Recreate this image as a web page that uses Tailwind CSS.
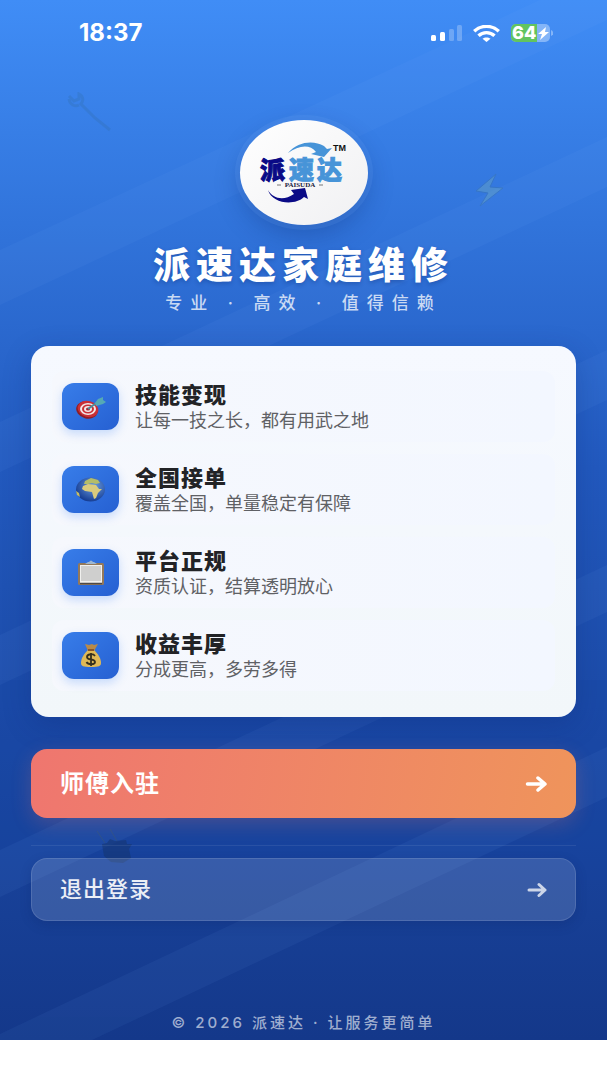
<!DOCTYPE html>
<html lang="zh-CN">
<head>
<meta charset="utf-8">
<meta name="viewport" content="width=device-width, initial-scale=1">
<title>派速达家庭维修</title>
<script src="https://cdn.jsdelivr.net/npm/@tailwindcss/browser@4"></script>
</head>
<body class="flex min-h-screen flex-col bg-white font-['Inter','Noto_Sans_CJK_SC',sans-serif]">
<div class="relative isolate flex flex-1 flex-col overflow-hidden bg-linear-to-b from-[#408df6] via-[#2259be] via-45% to-[#14388a] px-[31px]">

  <!-- Diagonal light bands -->
  <svg class="absolute inset-0 -z-10 h-full w-full" viewBox="0 0 607 1040" preserveAspectRatio="none" aria-hidden="true">
    <rect y="680" width="607" height="200" fill="#1442a4" opacity=".25"/>
    <g fill="#7fb4ff" opacity=".06">
      <path d="M0 250L540 0H607V20L0 305Z"/>
      <path d="M0 422L607 137V187L0 472Z"/>
      <path d="M0 635L607 350V400L0 685Z"/>
      <path d="M0 850L607 565V612L0 897Z"/>
      <path d="M0 1034L607 747V797L92 1040H0Z"/>
    </g>
  </svg>

  <!-- Faint tool ornaments -->
  <svg class="absolute left-[66px] top-[92px] -z-10 h-[42px] w-[48px] opacity-20" viewBox="0 0 48 42" fill="none" stroke="#2f6690" aria-hidden="true">
    <path d="M3 4l5 5 5-2V2c4 2 5 6 2 10L29 26 44 38" stroke-width="3"/><path d="M13 13c-4 2-9 0-10-6" stroke-width="3"/>
  </svg>
  <svg class="absolute left-[474px] top-[173px] -z-10 h-[34px] w-[31px] opacity-35" viewBox="0 0 31 34" aria-hidden="true">
    <path d="M22 1L2 18l12 2L6 33 29 15l-13-1z" fill="#7ab3bb" stroke="#3a729c"/>
  </svg>
  <svg class="absolute left-[96px] top-[828px] -z-10 h-[36px] w-[40px] opacity-60" viewBox="0 0 40 36" aria-hidden="true">
    <path d="M1 3l8 12M14 1l7 12" stroke="#35577c" stroke-width="1"/>
    <path d="M6 16l5-1 3-4 5 2 11-1 1 4 5 0-3 5 2 9-8 5-12-1-7-6z" fill="#163774"/>
  </svg>

  <header class="flex h-[66px] items-center justify-between pl-12 pr-[23px] text-white">
    <time class="text-2xl font-bold leading-6">18:37</time>
    <div class="flex items-center gap-[11px]">
      <svg class="h-4 w-[31px]" viewBox="0 0 31 16" fill="#fff" aria-label="信号">
        <rect y="10" width="5" height="6" rx="1.5"/><rect x="9" y="7" width="5" height="9" rx="1.5"/>
        <rect x="18" y="4" width="5" height="12" rx="1.5" opacity=".25"/><rect x="26" width="5" height="16" rx="1.5" opacity=".25"/>
      </svg>
      <svg class="h-[17px] w-[27px]" viewBox="0 0 27 17" fill="none" stroke="#fff" stroke-width="3.400" aria-label="无线网络">
        <path d="M1.200 6.200C8-.2 19-.2 25.800 6.200"/><path d="M5.500 10.800c4.500-4.200 11.500-4.200 16 0"/><path d="M9.500 13.800c2.300-1.900 5.700-1.900 8 0L13.500 17z" fill="#fff" stroke="none"/>
      </svg>
      <svg class="h-[18px] w-[42px]" viewBox="0 0 42 18" aria-label="电量 64%">
        <rect width="39" height="18" rx="5" fill="#84b5f8"/>
        <path d="M5 0H26V18H5a5 5 0 0 1-5-5V5a5 5 0 0 1 5-5z" fill="#62c45f"/>
        <path d="M40 6c3 1 3 5 0 6z" fill="#84b5f8"/>
        <text x="1" y="15" font-family="Inter" font-size="18" font-weight="800" fill="#fff">64</text>
        <path d="M35 3l-8 7h4l-2 6 9-8h-4z" fill="#fff"/>
      </svg>
    </div>
  </header>

  <main class="flex flex-col">
    <section class="flex flex-col items-center pt-[54px]">
      <div class="h-[105px] w-32 rounded-[50%] bg-linear-to-br from-white to-[#f0f0f2] shadow-[0_0_0_5px_rgba(120,180,255,0.13),0_10px_26px_rgba(10,40,110,0.3)]">
        <svg class="h-full w-full" viewBox="0 0 128 105" role="img" aria-label="派速达">
          <g font-family="Noto Sans CJK SC" font-weight="900" font-size="25" stroke-width="1">
            <text x="20" y="59" fill="#0a0a86" stroke="#0a0a86">派</text>
            <text x="49" y="59" fill="#4794d8" stroke="#4794d8">速</text>
            <text x="77" y="59" fill="#4794d8" stroke="#4794d8">达</text>
          </g>
          <path d="M48 33C58 21 74 20 84 26l3 3 5-1-8 9-13-3 5-2C70 24 59 25 48 33z" fill="#4794d8"/>
          <path d="M28 70c5 9 16 11 26 4l-3-4 14-2 3 11-4-2C55 86 32 84 28 70z" fill="#0a0a86"/>
          <text x="60" y="67" text-anchor="middle" font-family="Liberation Serif" font-size="7" font-weight="700" fill="#22223c">PAISUDA</text>
          <path d="M37 65h4M79 65h4" stroke="#555" stroke-width=".8"/>
          <text x="93" y="31" font-family="Liberation Sans" font-size="9" font-weight="700" fill="#111">TM</text>
        </svg>
      </div>
      <h1 class="mt-[18px] text-[37px] font-black leading-[46px] tracking-[6px] text-white text-shadow-[0_2px_4px_rgba(10,40,110,0.3)]">派速达家庭维修</h1>
      <p class="text-[17px] font-medium leading-7 tracking-[8px] text-white/75">专业 · 高效 · 值得信赖</p>
    </section>

    <ul class="mt-[29px] flex flex-col gap-3 rounded-[18px] bg-linear-to-b from-[#f6f9ff] to-[#f2f7fa] px-[21px] pb-[26px] pt-[25px] shadow-[0_8px_28px_rgba(10,35,110,0.25)]">
      <li class="flex h-[71px] items-center gap-4 rounded-xl bg-linear-to-r from-[#f6f8fd] to-[#f3f7ff] px-2.5">
        <span class="flex h-[47px] w-[57px] shrink-0 items-center justify-center rounded-xl bg-linear-to-br from-[#387de9] to-[#2660d2] shadow-[0_4px_10px_rgba(59,130,246,0.25)]">
          <svg class="h-[24px] w-[32px]" viewBox="0 0 32 24" aria-hidden="true">
            <ellipse cx="12" cy="15" rx="11" ry="8.500" transform="rotate(15 12 15)" fill="#8e1d25"/>
            <ellipse cx="13" cy="14" rx="10.500" ry="8" transform="rotate(15 13 14)" fill="#c92f35"/>
            <ellipse cx="13" cy="14" rx="8" ry="6" fill="#f3e9e9"/><ellipse cx="13" cy="14" rx="6" ry="4.500" fill="#c92f35"/>
            <ellipse cx="13" cy="14" rx="4" ry="3" fill="#f3e9e9"/><ellipse cx="13" cy="14" rx="2" ry="1.500" fill="#b01e2a"/>
            <path d="M13 14L24 6" stroke="#4d8b9a" stroke-width="2"/><path d="M20 8l3-4 5-2v3l3 2-3 2-7 2z" fill="#55a9b5"/>
          </svg>
        </span>
        <div><h2 class="text-[22px] font-black leading-7 tracking-[1px] text-[#222326]">技能变现</h2><p class="text-lg leading-6 text-[#5f6165]">让每一技之长，都有用武之地</p></div>
      </li>
      <li class="flex h-[71px] items-center gap-4 rounded-xl bg-linear-to-r from-[#f6f8fd] to-[#f3f7ff] px-2.5">
        <span class="flex h-[47px] w-[57px] shrink-0 items-center justify-center rounded-xl bg-linear-to-br from-[#387de9] to-[#2660d2] shadow-[0_4px_10px_rgba(59,130,246,0.25)]">
          <svg class="h-[25px] w-[31px]" viewBox="0 0 31 25" aria-hidden="true">
            <defs><radialGradient id="sea" cx=".6" cy=".35" r=".65"><stop stop-color="#6b9de0"/><stop offset="1" stop-color="#173e94"/></radialGradient></defs>
            <ellipse cx="15.500" cy="12.500" rx="14.500" ry="12" fill="url(#sea)"/>
            <path d="M10 4l6-3 7 2 2 3-4 1-4-1-4 1-4 0z" fill="#b5bd68"/>
            <path d="M8 9l5-2 8 1 3 4 3 0-4 4-2 5-2 1-2-7-7-1-3-2z" fill="#dacb7c"/>
            <path d="M1 14l3 2 1 4-3-2z" fill="#c6bd65"/>
          </svg>
        </span>
        <div><h2 class="text-[22px] font-black leading-7 tracking-[1px] text-[#222326]">全国接单</h2><p class="text-lg leading-6 text-[#5f6165]">覆盖全国，单量稳定有保障</p></div>
      </li>
      <li class="flex h-[71px] items-center gap-4 rounded-xl bg-linear-to-r from-[#f6f8fd] to-[#f3f7ff] px-2.5">
        <span class="flex h-[47px] w-[57px] shrink-0 items-center justify-center rounded-xl bg-linear-to-br from-[#387de9] to-[#2660d2] shadow-[0_4px_10px_rgba(59,130,246,0.25)]">
          <svg class="h-[26px] w-[28px]" viewBox="0 0 28 26" aria-hidden="true">
            <rect x="1" y="3" width="26" height="22" rx="1.500" fill="#94795a"/><rect x="3" y="5" width="22" height="18" fill="#f0f0ee"/>
            <rect x="4" y="6" width="20" height="15" fill="#cfcfce"/><path d="M3 23.500h22" stroke="#4e4845" stroke-width="1.500"/>
            <path d="M8 4l3-2h1q2-3 4 0h1l3 2z" fill="#9db6d0"/>
          </svg>
        </span>
        <div><h2 class="text-[22px] font-black leading-7 tracking-[1px] text-[#222326]">平台正规</h2><p class="text-lg leading-6 text-[#5f6165]">资质认证，结算透明放心</p></div>
      </li>
      <li class="flex h-[71px] items-center gap-4 rounded-xl bg-linear-to-r from-[#f6f8fd] to-[#f3f7ff] px-2.5">
        <span class="flex h-[47px] w-[57px] shrink-0 items-center justify-center rounded-xl bg-linear-to-br from-[#387de9] to-[#2660d2] shadow-[0_4px_10px_rgba(59,130,246,0.25)]">
          <svg class="h-[25px] w-[22px]" viewBox="0 0 22 25" aria-hidden="true">
            <path d="M5 1l4 1 3-1 2 1 4-1-4 7H8z" fill="#b98a49"/>
            <path d="M8 7h6c4 4 7 8 7 13 0 3-2 4-10 4S1 23 1 20C1 15 4 11 8 7z" fill="#dfb957"/>
            <path d="M8 7h6" stroke="#8a5528" stroke-width="2"/>
            <path d="M15 13c-2-3-8-2-8 1 0 4 8 1 8 5 0 3-7 3-8.500 0M11 10v13" fill="none" stroke="#35301f" stroke-width="1.800"/>
          </svg>
        </span>
        <div><h2 class="text-[22px] font-black leading-7 tracking-[1px] text-[#222326]">收益丰厚</h2><p class="text-lg leading-6 text-[#5f6165]">分成更高，多劳多得</p></div>
      </li>
    </ul>

    <button type="button" class="mt-8 flex h-[69px] items-center justify-between rounded-2xl bg-linear-100 from-[#ef766f] to-[#ef945b] px-[29px] text-white shadow-[0_6px_20px_rgba(239,120,105,0.22)]">
      <span class="text-2xl font-bold tracking-[1px]">师傅入驻</span>
      <svg class="h-[18px] w-[22px]" viewBox="0 0 22 18" fill="none" stroke="currentColor" stroke-width="3.500" stroke-linecap="round" stroke-linejoin="round" aria-hidden="true"><path d="M2.500 9h17M13 3l7 6-7 6"/></svg>
    </button>
    <hr class="mt-[27px] border-white/8">
    <button type="button" class="mt-3 flex h-[63px] items-center justify-between rounded-2xl border border-white/12 bg-white/14 px-7 text-white/90 shadow-[0_4px_12px_rgba(10,30,90,0.2)]">
      <span class="text-[22px] font-medium tracking-[1px]">退出登录</span>
      <svg class="h-4 w-5 text-white/75" viewBox="0 0 20 16" fill="none" stroke="currentColor" stroke-width="3" stroke-linecap="round" stroke-linejoin="round" aria-hidden="true"><path d="M2 8h16M12 2.500l6 5.500-6 5.500"/></svg>
    </button>
  </main>

  <footer class="mt-auto pb-[7px] text-center text-[15px] font-medium leading-5 tracking-[3px] text-white/60">© 2026 派速达 · 让服务更简单</footer>
</div>
<div class="h-10 shrink-0"></div>
</body>
</html>
